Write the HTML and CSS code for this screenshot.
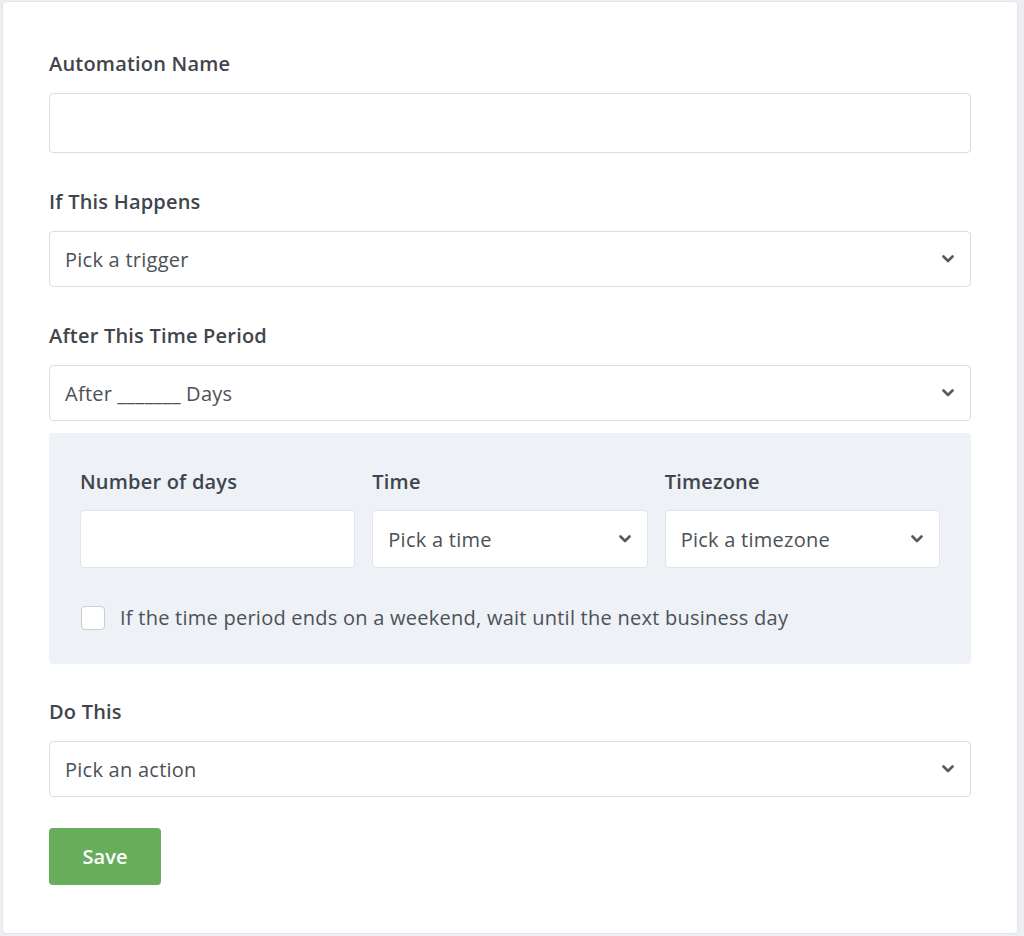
FILE: index.html
```html
<!DOCTYPE html>
<html lang="en">
<head>
    <meta charset="UTF-8">
    <meta name="viewport" content="width=device-width, initial-scale=1.0">
    <title>New Automation</title>
    <link rel="stylesheet" href="styles.css">
</head>
<body>

    <form class="card">
        <div class="field">
            <label class="label" for="name">Automation Name</label>
            <input class="input" id="name" type="text">
        </div>

        <div class="field">
            <label class="label">If This Happens</label>
            <div class="select">
                <span>Pick a trigger</span>
                <svg class="chevron" width="12" height="8" viewBox="0 0 12 8"><polyline points="1.5,1.5 6,6 10.5,1.5"/></svg>
            </div>
        </div>

        <div class="field">
            <label class="label">After This Time Period</label>
            <div class="select">
                <span>After _______ Days</span>
                <svg class="chevron" width="12" height="8" viewBox="0 0 12 8"><polyline points="1.5,1.5 6,6 10.5,1.5"/></svg>
            </div>
        </div>

        <!-- Delay options -->
        <div class="panel">
            <div class="panel-row">
                <div class="col">
                    <label class="label">Number of days</label>
                    <input class="input small" type="text">
                </div>
                <div class="col">
                    <label class="label">Time</label>
                    <div class="select small">
                        <span>Pick a time</span>
                        <svg class="chevron" width="12" height="8" viewBox="0 0 12 8"><polyline points="1.5,1.5 6,6 10.5,1.5"/></svg>
                    </div>
                </div>
                <div class="col">
                    <label class="label">Timezone</label>
                    <div class="select small">
                        <span>Pick a timezone</span>
                        <svg class="chevron" width="12" height="8" viewBox="0 0 12 8"><polyline points="1.5,1.5 6,6 10.5,1.5"/></svg>
                    </div>
                </div>
            </div>
            <label class="check">
                <span class="box"></span>
                If the time period ends on a weekend, wait until the next business day
            </label>
        </div>

        <div class="field">
            <label class="label">Do This</label>
            <div class="select">
                <span>Pick an action</span>
                <svg class="chevron" width="12" height="8" viewBox="0 0 12 8"><polyline points="1.5,1.5 6,6 10.5,1.5"/></svg>
            </div>
        </div>

        <button class="btn-save" type="button">Save</button>
    </form>

</body>
</html>
```

FILE: styles.css
```css
body {
    margin: 0;
    padding: 1px 6px 3px 2px;
    background-color: #eceef2;
    font-family: "Open Sans", Lato, sans-serif;
    color: #3f454c;
}

.card {
    background-color: #fff;
    border: 1px solid #e2e5e9;
    border-radius: 4px;
    padding: 50px 46px 47px 46px;
    height: 834px;
}

.field {
    margin-bottom: 37px;
}

.label {
    display: block;
    font-size: 20px;
    font-weight: 600;
    line-height: 24px;
    letter-spacing: 0.2px;
    margin-bottom: 17px;
    color: #3f454c;
}

.input {
    display: block;
    box-sizing: border-box;
    width: 100%;
    height: 60px;
    border: 1px solid #dadde1;
    border-radius: 4px;
    background: #fff;
    margin: 0;
}

.select {
    box-sizing: border-box;
    height: 56px;
    border: 1px solid #dadde1;
    border-radius: 4px;
    background: #fff;
    display: flex;
    align-items: center;
    justify-content: space-between;
    padding: 0 16px 0 15px;
    font-size: 20px;
    letter-spacing: 0.25px;
    color: #4c5157;
}

.chevron {
    fill: none;
    stroke: #555a5f;
    stroke-width: 2.6;
    stroke-linecap: round;
    stroke-linejoin: round;
}

/* grey box holding the delay options */
.panel {
    background-color: #eef1f6;
    border-radius: 4px;
    padding: 37px 31px 31px;
    margin: -25px 0 36px;
}

.panel-row {
    display: flex;
    gap: 17px;
}

.col {
    flex: 1;
}

.panel .label {
    margin-bottom: 16px;
}

.small {
    height: 58px;
    border-color: #e1e4e8;
}

.check {
    display: flex;
    align-items: center;
    gap: 15px;
    margin-top: 35px;
    line-height: 30px;
    font-size: 20px;
    letter-spacing: 0.25px;
    color: #4c5157;
}

.box {
    width: 22px;
    height: 22px;
    border: 1px solid #c9ccd1;
    border-radius: 4px;
    background: #fff;
    margin-left: 1px;
}

.btn-save {
    display: block;
    width: 112px;
    height: 57px;
    margin-top: -6px;
    border: none;
    border-radius: 4px;
    background-color: #67ad5b;
    color: #fff;
    font-family: "Open Sans", Lato, sans-serif;
    font-size: 20px;
    font-weight: 600;
}
```
